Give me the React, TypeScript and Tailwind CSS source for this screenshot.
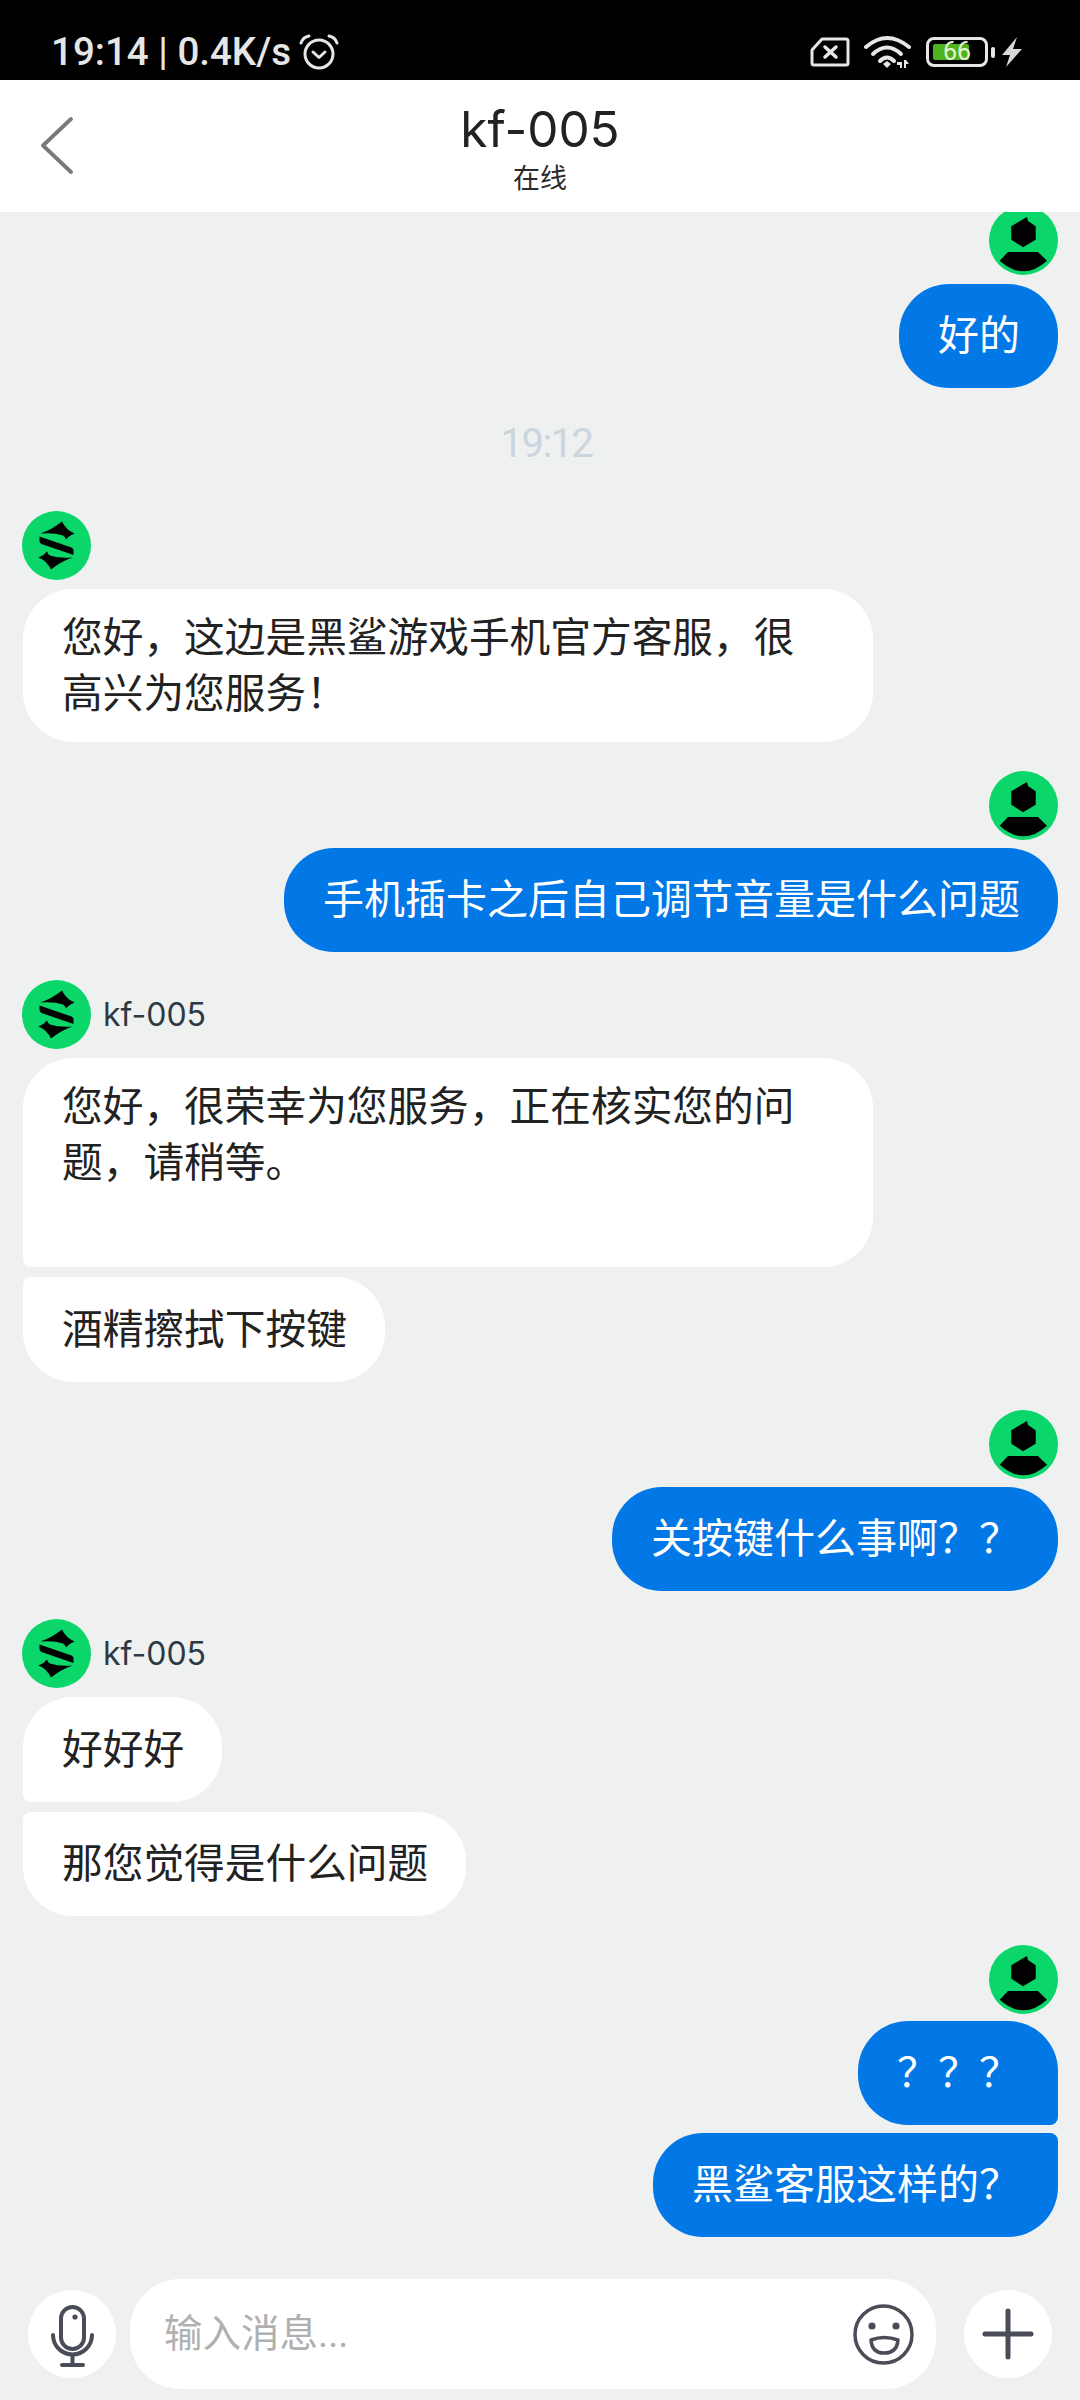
import { clsx } from "clsx"
import type { ReactNode } from "react"

const font = { fontFamily: 'Roboto, "Noto Sans CJK SC", sans-serif' }
const latin = { fontFamily: 'Inter, "Noto Sans CJK SC", sans-serif' }

function AgentAvatar() {
  return (
    <svg width="69" height="69" viewBox="0 0 69 69" className="shrink-0">
      <circle cx="34.5" cy="34.5" r="34.5" fill="#0ad66a" />
      <path d="M40 10.5 Q30 18.5 18.5 22.5 Q32 21.5 41 24.5 Q43.5 26 44 28.5 Q47 24.5 52.5 22.5 Q44 19 40 10.5Z" fill="#000" />
      <path d="M17.5 25.5 L49.5 36.5 Q51.5 37.5 51.5 39 V44 L19.5 33 Q17.5 32 17.5 30Z" fill="#000" />
      <path d="M40 10.5 Q30 18.5 18.5 22.5 Q32 21.5 41 24.5 Q43.5 26 44 28.5 Q47 24.5 52.5 22.5 Q44 19 40 10.5Z" fill="#000" transform="rotate(180 34.5 34.5)" />
    </svg>
  )
}

function UserAvatar() {
  return (
    <svg width="69" height="69" viewBox="0 0 69 69" className="shrink-0">
      <circle cx="34.5" cy="34.5" r="34.5" fill="#0ad66a" />
      <path d="M38 11 L39 15 L46.7 20.3 V33.7 L34 41.3 L22.3 33.7 V20.3 L32.3 14.3Z" fill="#000" />
      <path d="M19 46 H49 L58 54.7 Q34.5 76 10.7 54.7Z" fill="#000" />
    </svg>
  )
}

function Bubble({ mine, className, children }: { mine?: boolean; className?: string; children: ReactNode }) {
  return (
    <div
      className={clsx(
        "flex min-h-[104px] items-center rounded-[50px] py-5 pl-[39px] pr-[38px] leading-[56px]",
        mine ? "self-end bg-[#0277e6] text-[41px] text-white" : "self-start bg-white text-[40.7px] text-[#222222]",
        className
      )}
    >
      <span>{children}</span>
    </div>
  )
}

function AgentHead({ name, className }: { name?: boolean; className?: string }) {
  return (
    <div className={clsx("-ml-px flex items-center gap-3", className)}>
      <AgentAvatar />
      {name && <span className="text-[32px] text-[#2d3942]" style={latin}>kf-005</span>}
    </div>
  )
}

function UserHead({ className }: { className?: string }) {
  return (
    <div className={clsx("flex justify-end", className)}>
      <UserAvatar />
    </div>
  )
}

function StatusBar() {
  return (
    <div className="flex h-20 shrink-0 items-center bg-black pt-6 pl-[51px] pr-[58px] text-[#e6e6e6]">
      <span className="text-[38.5px] font-medium leading-none">19:14 | 0.4K/s</span>
      <svg width="40" height="36" viewBox="0 0 40 36" fill="none" stroke="#e6e6e6" className="ml-[8px]">
        <circle cx="20" cy="20" r="14" strokeWidth="3" />
        <path d="M14 18 L20 23.5 L26 18" strokeWidth="3" strokeLinecap="round" strokeLinejoin="round" />
        <path d="M2 9 Q4 3 10 2 M38 9 Q36 3 30 2" strokeWidth="3" strokeLinecap="round" />
      </svg>
      <div className="ml-auto flex items-center">
        <svg width="40" height="30" viewBox="0 0 40 30" fill="none" stroke="#e6e6e6">
          <path d="M12 2 H36 Q38 2 38 4 V26 Q38 28 36 28 H4 Q2 28 2 26 V13Z" strokeWidth="3" strokeLinejoin="round" />
          <path d="M15 10 L26 20 M26 10 L15 20" strokeWidth="3.5" strokeLinecap="round" />
        </svg>
        <svg width="48" height="34" viewBox="0 0 48 34" fill="none" stroke="#e6e6e6" className="ml-[14px]">
          <path d="M2 12 Q23 -6 45 12" strokeWidth="4" strokeLinecap="round" />
          <path d="M9 19 Q23 6 37 19" strokeWidth="4" strokeLinecap="round" />
          <path d="M16 26 Q23 19 30 26" strokeWidth="4" strokeLinecap="round" />
          <path d="M19 29 L23 26 L27 29 L23 33Z" fill="#e6e6e6" stroke="none" />
          <path d="M33 27 H38 V33 H36 V30 H33Z M40 33 V25 H42 L45 29 H42 V33Z" fill="#e6e6e6" stroke="none" />
        </svg>
        <div className="relative ml-[14px] h-[30px] w-[62px] rounded-[8px] border-[3px] border-[#e6e6e6]">
          <div className="absolute left-1 top-1 h-4 w-[36px] rounded-[2px] bg-[#4fb31b]" />
          <span className="absolute left-[14px] top-[-2px] text-[25px] leading-[28px] text-[#e4f5d8]">66</span>
        </div>
        <div className="ml-[3px] h-[11px] w-[4px] rounded-[2px] bg-[#e6e6e6]" />
        <svg width="20" height="30" viewBox="0 0 20 30" className="ml-[7px]">
          <path d="M15 0 L0 18 H8 L4 30 L20 12 H11Z" fill="#d8d8d8" />
        </svg>
      </div>
    </div>
  )
}

function Header() {
  return (
    <div className="relative z-10 flex h-[132px] shrink-0 flex-col items-center bg-white">
      <svg width="34" height="58" viewBox="0 0 34 58" fill="none" className="absolute left-[40px] top-[37px]">
        <path d="M31 2 L3 28.5 L31 55" stroke="#7a7a7a" strokeWidth="3.8" strokeLinecap="round" strokeLinejoin="round" />
      </svg>
      <div className="mt-[18px] text-[49.5px] leading-[62px] text-[#222222]" style={latin}>kf-005</div>
      <div className="mt-[3px] text-[27px] leading-[32px] text-[#2a2a2a]">在线</div>
    </div>
  )
}

function InputBar() {
  return (
    <div className="mt-[42px] flex items-center pl-[28px] pr-[28px]">
      <div className="flex h-[88px] w-[88px] shrink-0 items-center justify-center rounded-full bg-white">
        <svg width="88" height="88" viewBox="0 0 88 88" fill="none" stroke="#4a4d57" strokeWidth="4" strokeLinecap="round">
          <rect x="33" y="17" width="23" height="42" rx="11.5" />
          <circle cx="47" cy="27" r="2.6" fill="#4a4d57" stroke="none" />
          <path d="M25 45 a19.5 19.5 0 0 0 39 0" />
          <path d="M44.5 65 V74" />
          <path d="M34 75 H55" />
        </svg>
      </div>
      <div className="ml-[14px] flex h-[110px] w-[806px] shrink-0 items-center rounded-[50px] bg-white pl-[34px] pr-[22px]">
        <span className="text-[38.5px] text-[#b0b0b0]">输入消息...</span>
        <svg width="61" height="61" viewBox="0 0 61 61" fill="none" stroke="#4a4d57" strokeWidth="3.5" className="ml-auto">
          <circle cx="30.5" cy="30.5" r="28.5" />
          <circle cx="19" cy="22" r="3.6" fill="#4a4d57" stroke="none" />
          <circle cx="43" cy="22" r="3.6" fill="#4a4d57" stroke="none" />
          <path d="M18 36 Q31 31 45 36 Q44 49 31 49 Q19 49 18 36Z" strokeLinejoin="round" />
        </svg>
      </div>
      <div className="ml-[28px] flex h-[88px] w-[88px] shrink-0 items-center justify-center rounded-full bg-white">
        <svg width="52" height="52" viewBox="0 0 52 52" fill="none" stroke="#4a4d57" strokeWidth="5" strokeLinecap="round">
          <path d="M26 3 V49 M3 26 H49" />
        </svg>
      </div>
    </div>
  )
}

export default function App() {
  return (
    <div className="flex h-[2400px] w-[1080px] flex-col overflow-hidden bg-[#eff1f1]" style={font}>
      <StatusBar />
      <Header />
      <div className="flex flex-col pl-[23px] pr-[22px]">
        <UserHead className="-mt-[6px]" />
        <Bubble mine className="mt-[9px]">好的</Bubble>

        <div className="mt-[31px] h-[50px] pl-[12px] text-center text-[40px] leading-[50px] tracking-[-1.5px] text-[#cbd5de]">19:12</div>

        <AgentHead className="mt-[42px]" />
        <Bubble className="mt-[9px] w-[850px] pr-[50px] pt-[21px]">您好，这边是黑鲨游戏手机官方客服，很高兴为您服务！</Bubble>

        <UserHead className="mt-[29px]" />
        <Bubble mine className="mt-[8px]">手机插卡之后自己调节音量是什么问题</Bubble>

        <AgentHead name className="mt-[28px]" />
        <Bubble className="mt-[9px] min-h-[209px] w-[850px] items-start rounded-bl-[8px] pr-[50px] pt-[21px]">您好，很荣幸为您服务，正在核实您的问题，请稍等。</Bubble>
        <Bubble className="mt-[10px] min-h-[105px] rounded-tl-[8px]">酒精擦拭下按键</Bubble>

        <UserHead className="mt-[28px]" />
        <Bubble mine className="mt-[8px]">关按键什么事啊？？</Bubble>

        <AgentHead name className="mt-[28px]" />
        <Bubble className="mt-[9px] min-h-[105px] rounded-bl-[8px]">好好好</Bubble>
        <Bubble className="mt-[10px] rounded-tl-[8px]">那您觉得是什么问题</Bubble>

        <UserHead className="mt-[29px]" />
        <Bubble mine className="mt-[7px] rounded-br-[8px]">？？？</Bubble>
        <Bubble mine className="mt-[8px] rounded-tr-[8px]">黑鲨客服这样的？</Bubble>
      </div>
      <InputBar />
    </div>
  )
}
